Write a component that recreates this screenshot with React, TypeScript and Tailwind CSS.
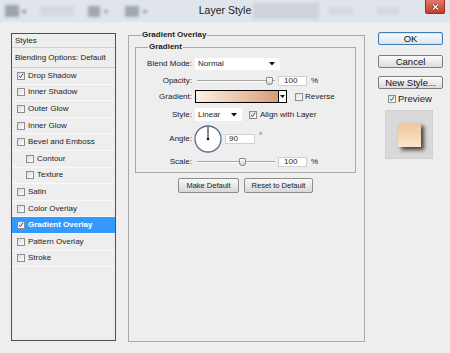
import React from "react";

interface StyleItem {
  label: string;
  checked?: boolean;
  indent?: boolean;
  selected?: boolean;
}

const styleItems: StyleItem[] = [
  { label: "Drop Shadow", checked: true },
  { label: "Inner Shadow" },
  { label: "Outer Glow" },
  { label: "Inner Glow" },
  { label: "Bevel and Emboss" },
  { label: "Contour", indent: true },
  { label: "Texture", indent: true },
  { label: "Satin" },
  { label: "Color Overlay" },
  { label: "Gradient Overlay", checked: true, selected: true },
  { label: "Pattern Overlay" },
  { label: "Stroke" },
];

function Check({ checked }: { checked?: boolean }) {
  return (
    <span className="flex h-[8px] w-[8px] shrink-0 items-center justify-center border border-[#8e8e8e] bg-linear-to-br from-[#dcdcdc] to-white">
      {checked && (
        <svg viewBox="0 0 8 8" className="h-[8px] w-[8px]">
          <path d="M1.6 4.1 L3.3 6.1 L6.8 0.8" fill="none" stroke="#2b4c9a" strokeWidth="1.3" />
        </svg>
      )}
    </span>
  );
}

function Arrow() {
  return (
    <svg width="6" height="4" viewBox="0 0 6 4">
      <path d="M0 0 H6 L3 3.5 Z" fill="#111" />
    </svg>
  );
}

function Slider({ pos }: { pos: number }) {
  return (
    <div className="relative h-[12px] w-[80px]">
      <div className="absolute left-[2px] right-0 top-[5px] h-[2px] border-t border-b border-t-[#a3a3a3] border-b-white" />
      <div
        className="absolute top-[2px] h-[8px] w-[7px] rounded-b-[3px] rounded-t-[1px] border border-[#8a8a8a] bg-linear-to-b from-white to-[#cfcfcf]"
        style={{ left: pos }}
      />
    </div>
  );
}

function NumBox({ value }: { value: string }) {
  return (
    <div className="flex h-[10px] w-[29px] items-center border border-[#d0d0d0] bg-white pl-[5px] text-[8px] leading-none">
      {value}
    </div>
  );
}

function Row({ label, className, children }: { label: string; className: string; children: React.ReactNode }) {
  return (
    <div className={`flex items-center ${className}`}>
      <span className="w-[56px] text-right">{label}</span>
      <div className="ml-[3px] flex items-center">{children}</div>
    </div>
  );
}

export default function App() {
  return (
    <div className="h-[353px] w-[450px] overflow-hidden bg-[#eeeeee] font-['Liberation_Sans',Arial,sans-serif] text-[8px] leading-[10px] text-[#1c1c1c]">
      {/* title bar */}
      <div className="relative flex h-[22px] items-center bg-[#dfe5eb]">
        <div className="flex items-center blur-[1.5px]">
          <div className="ml-[5px] h-[12px] w-[14px] bg-[#9ea4ab]" />
          <div className="ml-[3px] h-[3px] w-[4px] bg-[#8f959c]" />
          <div className="ml-[14px] h-[10px] w-[34px] bg-[#d3d9df]" />
          <div className="ml-[14px] h-[11px] w-[12px] bg-[#a2a8ae]" />
          <div className="ml-[4px] h-[3px] w-[4px] bg-[#999fa5]" />
          <div className="ml-[17px] h-[11px] w-[14px] bg-[#a2a8ae]" />
          <div className="ml-[4px] h-[3px] w-[4px] bg-[#999fa5]" />
          <div className="ml-[106px] h-[16px] w-[66px] bg-[#cdd3d9]" />
          <div className="ml-[10px] h-[8px] w-[24px] bg-[#d4dae0]" />
          <div className="ml-[24px] h-[8px] w-[22px] bg-[#d4dae0]" />
        </div>
        <div className="absolute inset-x-0 top-[4px] text-center text-[10.5px] leading-[13px] text-[#202020]">
          Layer Style
        </div>
        <div className="absolute right-[5px] top-0 flex h-[14px] w-[20px] items-center justify-center rounded-b-[2px] border border-t-0 border-[#9a3026] bg-linear-to-b from-[#e0786c] to-[#c23b2d]">
          <svg width="7" height="6" viewBox="0 0 7 6">
            <path d="M1 0.5 L6 5.5 M6 0.5 L1 5.5" stroke="#5a1a14" strokeWidth="2.4" />
            <path d="M1 0.5 L6 5.5 M6 0.5 L1 5.5" stroke="#fff" strokeWidth="1.4" />
          </svg>
        </div>
      </div>

      <div className="flex items-start pl-[11px] pt-[8px]">
        {/* styles list */}
        <div className="mt-[3px] h-[308px] w-[105px] border border-[#4f4f4f]">
          <div className="flex h-[14px] items-center border-b border-[#cfcfcf] pl-[3px]">Styles</div>
          <div className="flex h-[20px] items-center border-b border-[#cfcfcf] pl-[3px]">Blending Options: Default</div>
          {styleItems.map((item) => (
            <div
              key={item.label}
              className={`flex h-[16.6px] items-center gap-[2px] border-b border-[#f9f9f9] ${
                item.indent ? "pl-[14px]" : "pl-[5px]"
              } ${item.selected ? "bg-[#3399ff] font-bold text-white" : ""}`}
            >
              <Check checked={item.checked} />
              <span className="ml-[1px]">{item.label}</span>
            </div>
          ))}
        </div>

        {/* gradient overlay panel */}
        <fieldset className="ml-[12px] h-[312px] w-[237px] border border-[#a8a8a8] p-0">
          <legend className="ml-[12px] px-[1px] font-bold leading-[10px]">Gradient Overlay</legend>
          <fieldset className="ml-[6px] mt-[2px] w-[221px] border border-[#a8a8a8] p-0 pb-[4px]">
            <legend className="ml-[12px] px-[1px] font-bold leading-[10px]">Gradient</legend>
            <Row label="Blend Mode:" className="mt-[6px] h-[12px]">
              <div className="flex h-[12px] w-[85px] items-center justify-between bg-white pl-[3px] pr-[5px]">
                <span>Normal</span>
                <Arrow />
              </div>
            </Row>
            <Row label="Opacity:" className="mt-[5px] h-[12px]">
              <Slider pos={71} />
              <div className="ml-[3px]">
                <NumBox value="100" />
              </div>
              <span className="ml-[4px]">%</span>
            </Row>
            <Row label="Gradient:" className="mt-[3px] h-[13px]">
              <div className="h-[13px] w-[84px] border border-black bg-linear-to-r from-[#fdf1e4] to-[#d69e77]" />
              <div className="flex h-[13px] w-[8px] items-center justify-center border border-l-0 border-black bg-white">
                <svg width="5" height="3" viewBox="0 0 5 3">
                  <path d="M0 0 H5 L2.5 3 Z" fill="#111" />
                </svg>
              </div>
              <div className="ml-[8px]">
                <Check />
              </div>
              <span className="ml-[2px]">Reverse</span>
            </Row>
            <Row label="Style:" className="mt-[5px] h-[13px]">
              <div className="flex h-[13px] w-[47px] items-center justify-between bg-white pl-[3px] pr-[5px]">
                <span>Linear</span>
                <Arrow />
              </div>
              <div className="ml-[7px]">
                <Check checked />
              </div>
              <span className="ml-[3px]">Align with Layer</span>
            </Row>
            <Row label="Angle:" className="mt-[4px] h-[28px]">
              <svg width="28" height="28" viewBox="0 0 28 28" className="-ml-[1px]">
                <circle cx="14" cy="14" r="13" fill="#fff" stroke="#5a6d8e" strokeWidth="1.3" />
                <line x1="14" y1="14" x2="14" y2="1.5" stroke="#111" strokeWidth="1" />
                <circle cx="14" cy="14" r="1.3" fill="#111" />
              </svg>
              <div className="ml-[3px]">
                <div className="flex h-[10px] w-[30px] items-center border border-[#d0d0d0] bg-white pl-[3px] leading-none">
                  90
                </div>
              </div>
              <span className="ml-[4px] -mt-[6px]">°</span>
            </Row>
            <Row label="Scale:" className="mt-[3px] h-[12px]">
              <Slider pos={44} />
              <div className="ml-[3px]">
                <NumBox value="100" />
              </div>
              <span className="ml-[4px]">%</span>
            </Row>
          </fieldset>
          <div className="mt-[5px] flex justify-center gap-[5px] pr-[2px]">
            <button className="h-[15px] w-[61px] rounded-[2px] border border-[#8c8c8c] bg-linear-to-b from-[#f9f9f9] to-[#d8d8d8] text-[7.5px] text-[#1c1c1c]">
              Make Default
            </button>
            <button className="h-[15px] w-[69px] rounded-[2px] border border-[#8c8c8c] bg-linear-to-b from-[#f9f9f9] to-[#d8d8d8] text-[7.5px] text-[#1c1c1c]">
              Reset to Default
            </button>
          </div>
        </fieldset>

        {/* right column */}
        <div className="ml-[13px] mt-[2px] flex w-[65px] flex-col text-[9.5px]">
          <button className="h-[13px] w-[65px] rounded-[2px] border border-[#3d7fb4] bg-linear-to-b from-[#fbfdff] to-[#dde4ea] leading-none text-[#111] shadow-[inset_0_0_0_1px_#cfe6f6]">
            OK
          </button>
          <button className="mt-[10px] h-[13px] w-[65px] rounded-[2px] border border-[#7d7d7d] bg-linear-to-b from-[#fbfbfb] to-[#dcdcdc] leading-none text-[#111]">
            Cancel
          </button>
          <button className="mt-[8px] h-[13px] w-[65px] rounded-[2px] border border-[#7d7d7d] bg-linear-to-b from-[#fbfbfb] to-[#dcdcdc] leading-none text-[#111]">
            New Style...
          </button>
          <div className="ml-[10px] mt-[6px] flex h-[8px] items-center gap-[2px]">
            <Check checked />
            <span className="leading-none">Preview</span>
          </div>
          <div className="ml-[7px] mt-[7px] flex h-[49px] w-[48px] items-center justify-center border border-[#d0d0d0] bg-[#d9d9d9]">
            <div className="h-[24px] w-[23px] bg-linear-to-t from-[#fbe5cd] to-[#efc59b] shadow-[3px_3px_4px_rgba(0,0,0,0.7)]" />
          </div>
        </div>
      </div>
    </div>
  );
}
